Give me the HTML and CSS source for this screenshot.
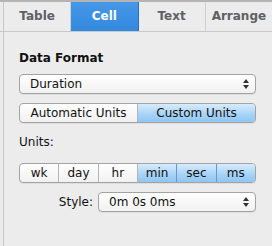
FILE: index.html
```html
<!DOCTYPE html>
<html lang="en">
<head>
    <meta charset="UTF-8">
    <title>Cell inspector</title>
    <link rel="stylesheet" href="styles.css">
</head>
<body>
    <div class="tabs">
        <div class="tab">Table</div>
        <div class="tab active">Cell</div>
        <div class="tab">Text</div>
        <div class="tab">Arrange</div>
    </div>

    <div class="panel">
        <div class="heading">Data Format</div>
        <div class="popup">
            <span>Duration</span>
            <span class="arrows"><i class="up"></i><i class="down"></i></span>
        </div>

        <div class="segmented">
            <div class="seg">Automatic Units</div>
            <div class="seg on">Custom Units</div>
        </div>

        <div class="label">Units:</div>
        <div class="segmented">
            <div class="seg">wk</div>
            <div class="seg">day</div>
            <div class="seg">hr</div>
            <div class="seg on">min</div>
            <div class="seg on">sec</div>
            <div class="seg on">ms</div>
        </div>

        <div class="style-row">
            <span class="style-label">Style:</span>
            <div class="popup grow">
                <span>0m 0s 0ms</span>
                <span class="arrows"><i class="up"></i><i class="down"></i></span>
            </div>
        </div>
    </div>
</body>
</html>
```

FILE: styles.css
```css
html, body {
    margin: 0;
    padding: 0;
    background: #ececec;
    font-family: "DejaVu Sans", sans-serif;
    font-size: 12px;
    line-height: 15px;
    color: #111;
}

/* tab bar */
.tabs {
    display: flex;
    height: 29px;
    border-top: 2px solid #b4b4b4;
    border-bottom: 1px solid #c8c8c8;
    /* left edge line of the inspector runs through the bar */
    background: linear-gradient(to right, transparent 3px, #c6c6c6 3px, #c6c6c6 4px, transparent 4px), #ececec;
}
.tab {
    flex: 1;
    display: flex;
    align-items: center;
    justify-content: center;
    font-weight: bold;
    color: #5e6066;
    border-right: 1px solid #d0d0d0;
}
.tab:first-child {
    padding-left: 4px;
}
.tab:last-child {
    border-right: none;
}
.tab.active {
    background: linear-gradient(#4697e6, #3389df);
    color: #fff;
    border-right: 1px solid #2a6fb8;
}

.panel {
    box-sizing: border-box;
    margin-left: 3px;
    border-left: 1px solid #c6c6c6;
    height: 214px;
    padding: 19px 16px 0 15px;
}

.heading {
    font-weight: bold;
    margin-bottom: 8px;
}
.label {
    margin: 12px 0 13px;
}

/* popup button */
.popup {
    display: flex;
    align-items: center;
    justify-content: space-between;
    height: 18px;
    padding: 0 6px 0 10px;
    border: 1px solid #a3a3a3;
    border-radius: 4px;
    background: linear-gradient(#ffffff, #f1f1f1);
    box-shadow: 0 1px 0 rgba(0,0,0,0.06);
}
.arrows {
    display: flex;
    flex-direction: column;
    gap: 2px;
}
.arrows i {
    display: block;
    width: 0;
    height: 0;
    border-left: 3px solid transparent;
    border-right: 3px solid transparent;
}
.arrows .up {
    border-bottom: 4px solid #333;
}
.arrows .down {
    border-top: 4px solid #333;
}

/* segmented controls */
.segmented {
    display: flex;
    height: 18px;
    margin-top: 9px;
    border: 1px solid #a3a3a3;
    border-radius: 4px;
    overflow: hidden;
    background: linear-gradient(#ffffff, #f1f1f1);
    box-shadow: 0 1px 0 rgba(0,0,0,0.06);
}
.label + .segmented {
    margin-top: 0;
}
.seg {
    flex: 1;
    display: flex;
    align-items: center;
    justify-content: center;
    border-right: 1px solid #b4b4b4;
}
.seg:last-child {
    border-right: none;
}
.seg.on {
    background: linear-gradient(#d8ecfd, #a9d4f8 55%, #8ec6f4);
    border-right-color: #6f93c2;
}

.style-row {
    display: flex;
    align-items: center;
    margin-top: 9px;
}
.style-label {
    width: 74px;
    padding-right: 5px;
    text-align: right;
}
.grow {
    flex: 1;
}
```
